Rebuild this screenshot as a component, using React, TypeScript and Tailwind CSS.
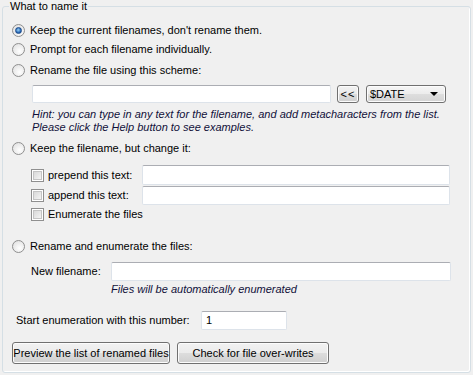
import React from "react";

const font = "font-['Liberation_Sans',Arial,sans-serif]";

function Radio({ checked = false }: { checked?: boolean }) {
  return (
    <span className="w-[13px] h-[13px] shrink-0 rounded-full border border-[#8f8f8f] bg-[radial-gradient(circle_at_60%_65%,#ffffff,#dcdcdc)] flex items-center justify-center">
      {checked && (
        <span className="w-[7px] h-[7px] rounded-full bg-[radial-gradient(circle_at_45%_40%,#9ad3f5,#2a6ab8_60%,#123f7a)] border border-[#1c4a8a]" />
      )}
    </span>
  );
}

function Check() {
  return (
    <span className="w-[13px] h-[13px] shrink-0 border border-[#8f8f8f] bg-white flex items-center justify-center">
      <span className="w-[9px] h-[9px] bg-[linear-gradient(135deg,#d9d9d9,#f4f4f4)] border border-[#c4c4c4]" />
    </span>
  );
}

function TextBox({ className = "", value = "" }: { className?: string; value?: string }) {
  return (
    <div
      className={`bg-white border border-[#dde3ea] border-t-[#abadb3] rounded-[2px] flex items-center pl-[4px] ${className}`}
    >
      {value}
    </div>
  );
}

function Btn({ children, className = "" }: { children: React.ReactNode; className?: string }) {
  return (
    <div
      className={`border border-[#707070] rounded-[3px] bg-[linear-gradient(#f2f2f2_0%,#ebebeb_50%,#dddddd_50%,#cfcfcf_100%)] shadow-[inset_0_0_0_1px_#fcfcfc] flex items-center justify-center overflow-hidden whitespace-nowrap ${className}`}
    >
      {children}
    </div>
  );
}

export default function App() {
  return (
    <div className={`w-[473px] h-[375px] bg-[#f0f0f0] pl-[2px] text-[11px] text-black ${font}`}>
      <fieldset className="w-[469px] h-[373px] border border-[#d5dfe5] rounded-[3px] shadow-[inset_-1px_-1px_0_#ffffff]">
        <legend className="ml-[6px] px-[1px] leading-[13px]">What to name it</legend>

        {/* scheme choices */}
        <div className="flex flex-col">
          <div className="mt-[8px] h-[18px] pl-[9px] flex items-center gap-[5px]">
            <Radio checked />
            <span>Keep the current filenames, don't rename them.</span>
          </div>
          <div className="h-[21px] pl-[9px] flex items-center gap-[5px]">
            <Radio />
            <span>Prompt for each filename individually.</span>
          </div>
          <div className="h-[20px] pl-[9px] flex items-center gap-[5px]">
            <Radio />
            <span>Rename the file using this scheme:</span>
          </div>

          <div className="mt-[5px] h-[18px] pl-[29px] flex items-stretch">
            <TextBox className="w-[299px]" />
            <Btn className="ml-[6px] w-[22px] rounded-[2px] text-[11px] tracking-[1px]">&lt;&lt;</Btn>
            <Btn className="ml-[7px] w-[80px] justify-between! pl-[3px] pr-[7px] bg-[linear-gradient(#f6f6f6_0%,#ececec_50%,#dedede_50%,#d4d4d4_100%)]">
              <span>$DATE</span>
              <span className="w-0 h-0 border-l-[4px] border-r-[4px] border-t-[4px] border-l-transparent border-r-transparent border-t-black" />
            </Btn>
          </div>

          <div className="mt-[5px] pl-[29px] italic leading-[13px] text-[#10103a]">
            <div>Hint: you can type in any text for the filename, and add metacharacters from the list.</div>
            <div>Please click the Help button to see examples.</div>
          </div>

          <div className="mt-[4px] h-[20px] pl-[9px] flex items-center gap-[5px]">
            <Radio />
            <span>Keep the filename, but change it:</span>
          </div>

          <div className="mt-[7px] h-[20px] pl-[28px] flex items-center">
            <Check />
            <span className="ml-[4px] w-[94px]">prepend this text:</span>
            <TextBox className="w-[308px] h-[20px]" />
          </div>
          <div className="h-[20px] pl-[28px] flex items-center">
            <Check />
            <span className="ml-[4px] w-[94px]">append this text:</span>
            <TextBox className="w-[308px] h-[19px]" />
          </div>
          <div className="h-[19px] pl-[28px] flex items-center">
            <Check />
            <span className="ml-[4px]">Enumerate the files</span>
          </div>

          <div className="mt-[12px] h-[20px] pl-[9px] flex items-center gap-[5px]">
            <Radio />
            <span>Rename and enumerate the files:</span>
          </div>

          <div className="mt-[6px] h-[19px] pl-[28px] flex items-center">
            <span className="w-[80px]">New filename:</span>
            <TextBox className="w-[340px] h-[19px]" />
          </div>
          <div className="h-[16px] pl-[108px] flex items-center italic text-[#10103a]">
            Files will be automatically enumerated
          </div>

          <div className="mt-[14px] h-[19px] pl-[13px] flex items-center">
            <span className="w-[185px]">Start enumeration with this number:</span>
            <TextBox className="w-[86px] h-[19px]" value="1" />
          </div>

          <div className="mt-[12px] h-[22px] pl-[9px] flex items-stretch gap-[7px]">
            <Btn className="w-[158px]">Preview the list of renamed files</Btn>
            <Btn className="w-[152px]">Check for file over-writes</Btn>
          </div>
        </div>
      </fieldset>
    </div>
  );
}
